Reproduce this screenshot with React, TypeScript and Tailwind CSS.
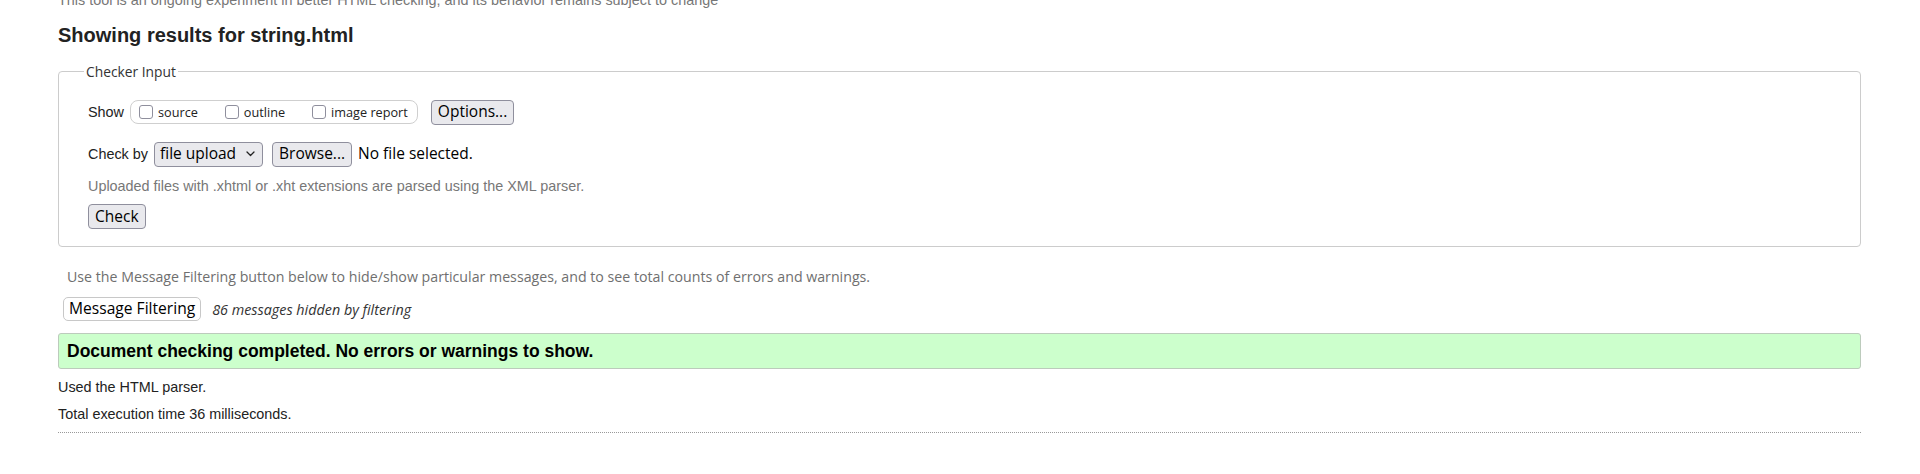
import React from "react";

function Box({ label }: { label: string }) {
  return (
    <span className="flex items-center">
      <span className="w-[14px] h-[14px] border border-[#8f8f9d] rounded-[3px] bg-white" />
      <span className="ml-[5px] font-['Open_Sans',sans-serif] text-[12.7px] leading-[17px] text-[#222]">{label}</span>
    </span>
  );
}

function Btn({ children, className = "" }: { children: React.ReactNode; className?: string }) {
  return (
    <span
      className={
        "inline-flex items-center h-[25px] px-[6px] border border-[#8f8f9d] rounded-[4px] bg-[#e9e9ed] font-['Open_Sans',sans-serif] text-[15.5px] leading-none text-black " +
        className
      }
    >
      {children}
    </span>
  );
}

export default function App() {
  return (
    <div className="w-full h-[474px] overflow-hidden bg-white font-['Liberation_Sans',Arial,sans-serif] text-[14.4px] text-[#222]">
      <div className="pl-[58px] pr-[59px]">
        <p className="mt-[-8px] leading-[16px] text-[#777]">
          This tool is an ongoing experiment in better HTML checking, and its behavior remains subject to change
        </p>
        <h2 className="mt-[16px] text-[20px] leading-[23px] font-bold text-[#222]">Showing results for string.html</h2>

        <fieldset className="mt-[15px] border border-[#cccccc] rounded-[4px] pl-[29px] pr-[29px] pt-[18px] pb-[17px]">
          <legend className="ml-[-4px] px-[2px] font-['Open_Sans',sans-serif] text-[13.8px] leading-[19px] text-[#333]">
            Checker Input
          </legend>

          <div className="flex items-center h-[26px]">
            <span className="leading-[17px]">Show</span>
            <span className="ml-[6px] flex items-center h-[24px] pl-[8px] pr-[9px] border border-[#cfcfcf] rounded-[8px] bg-white">
              <Box label="source" />
              <span className="ml-[27px]">
                <Box label="outline" />
              </span>
              <span className="ml-[27px]">
                <Box label="image report" />
              </span>
            </span>
            <Btn className="ml-[13px]">Options...</Btn>
          </div>

          <div className="flex items-center h-[26px] mt-[16px]">
            <span className="leading-[17px]">Check by</span>
            <span className="ml-[6px] inline-flex items-center h-[25px] pl-[5px] pr-[7px] border border-[#8f8f9d] rounded-[4px] bg-[#e9e9ed] font-['Open_Sans',sans-serif] text-[15.5px] leading-none text-black">
              file upload
              <svg className="ml-[10px]" width="9" height="6" viewBox="0 0 9 6" fill="none">
                <path d="M1 1 L4.5 4.5 L8 1" stroke="#222" strokeWidth="1.3" strokeLinecap="round" strokeLinejoin="round" />
              </svg>
            </span>
            <Btn className="ml-[9px]">Browse...</Btn>
            <span className="ml-[6px] font-['Open_Sans',sans-serif] text-[15.5px] leading-none text-black">No file selected.</span>
          </div>

          <p className="mt-[11px] leading-[17px] text-[#777]">
            Uploaded files with .xhtml or .xht extensions are parsed using the XML parser.
          </p>

          <div className="mt-[9px] flex">
            <Btn className="h-[24px]">Check</Btn>
          </div>
        </fieldset>

        <p className="mt-[20px] pl-[9px] font-['Open_Sans',sans-serif] text-[14.2px] leading-[19px] text-[#6f6f6f]">
          Use the Message Filtering button below to hide/show particular messages, and to see total counts of errors and warnings.
        </p>

        <div className="mt-[11px] flex items-center h-[24px]">
          <span className="ml-[5px] inline-flex items-center h-[24px] px-[5px] border border-[#c8c8c8] rounded-[5px] bg-white font-['Open_Sans',sans-serif] text-[15.6px] leading-none text-black">
            Message Filtering
          </span>
          <span className="ml-[11px] font-['Open_Sans',sans-serif] italic text-[14.35px] leading-[19px] text-[#333]">
            86 messages hidden by filtering
          </span>
        </div>

        <div className="mt-[12px] h-[36px] flex items-center pl-[8px] border border-[#bccbbc] rounded-[3px] bg-[#ccffcc]">
          <span className="text-[17.5px] leading-[20px] font-bold text-black">
            Document checking completed. No errors or warnings to show.
          </span>
        </div>

        <p className="mt-[10px] leading-[17px] text-[#222]">Used the HTML parser.</p>
        <p className="mt-[10px] leading-[17px] text-[#222]">Total execution time 36 milliseconds.</p>
        <div className="mt-[9px] border-t border-dotted border-[#999]" />
      </div>
    </div>
  );
}
